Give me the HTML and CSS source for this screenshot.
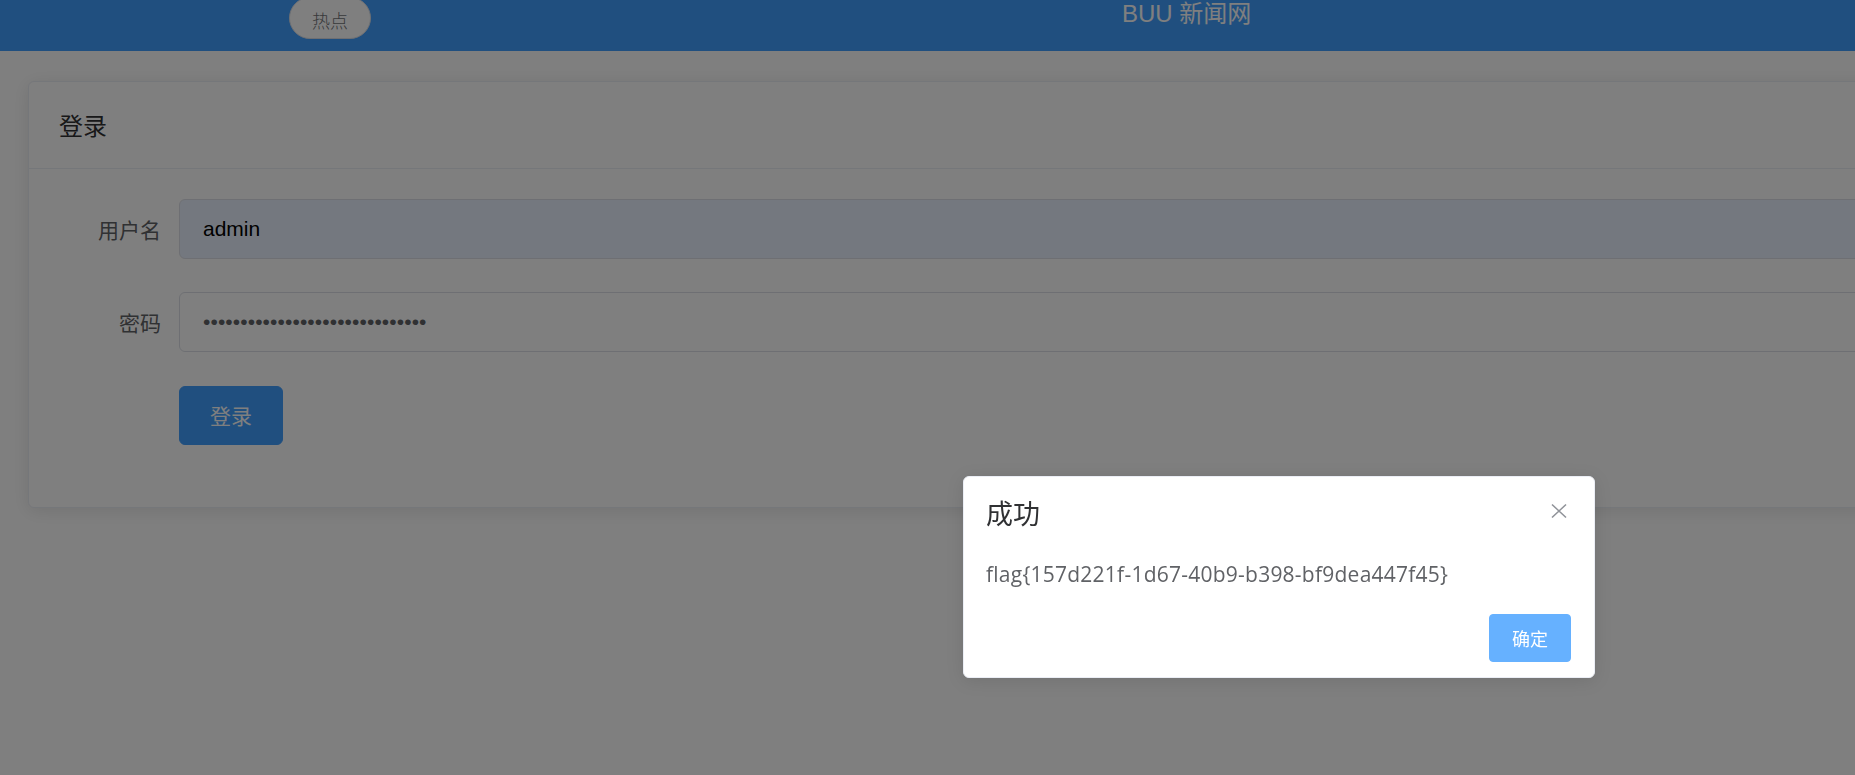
FILE: index.html
```html
<!DOCTYPE html>
<html lang="zh-CN">
<head>
<meta charset="utf-8">
<title>BUU 新闻网 - 登录</title>
<link rel="stylesheet" href="styles.css">
</head>
<body>
<div class="page">
  <header class="topbar">
    <button class="hot-pill">热点</button>
    <div class="site-title">BUU 新闻网</div>
  </header>

  <section class="card">
    <div class="card-header">登录</div>
    <div class="card-body">
      <div class="form-item">
        <label class="form-label">用户名</label>
        <div class="form-content">
          <input class="text-input autofilled" type="text" value="admin">
        </div>
      </div>
      <div class="form-item pwd">
        <label class="form-label">密码</label>
        <div class="form-content">
          <input class="text-input" type="password" value="aaaaaaaaaaaaaaaaaaaaaaaaaaaaaa">
        </div>
      </div>
      <div class="form-item last">
        <div class="form-content offset">
          <button class="primary-btn">登录</button>
        </div>
      </div>
    </div>
  </section>
</div>

<div class="mask"></div>

<div class="msgbox">
  <div class="msgbox-header">
    <div class="msgbox-title">成功</div>
    <button class="msgbox-close" aria-label="Close">
      <svg width="24" height="24" viewBox="0 0 24 24"><path d="M5 5.5 L19 18.5 M19 5.5 L5 18.5" stroke="#909399" stroke-width="1.6" fill="none"/></svg>
    </button>
  </div>
  <div class="msgbox-content">flag{157d221f-1d67-40b9-b398-bf9dea447f45}</div>
  <div class="msgbox-btns">
    <button class="confirm-btn">确定</button>
  </div>
</div>
</body>
</html>
```

FILE: styles.css
```css
html, body {
  margin: 0;
  padding: 0;
  overflow: hidden;
  background: #ffffff;
  width: 1855px;
  height: 775px;
}

body {
  font-family: "Noto Sans CJK SC", "Liberation Sans", sans-serif;
  color: #303133;
}

.page {
  width: 1855px;
}

.topbar {
  height: 51px;
  background: #409eff;
  display: flex;
  align-items: flex-start;
  overflow: hidden;
}

.hot-pill {
  margin: -3px 0 0 289px;
  width: 82px;
  height: 42px;
  border-radius: 21px;
  border: 1px solid #dcdfe6;
  background: #ffffff;
  color: #707276;
  font-family: "Noto Sans CJK SC", sans-serif;
  font-weight: 300;
  font-size: 18px;
  line-height: 1;
  padding: 3px 0 0 0;
}

.site-title {
  margin-left: 751px;
  color: #ffffff;
  font-family: "Liberation Sans", "Noto Sans CJK SC", sans-serif;
  font-size: 24px;
  line-height: 28px;
  height: 28px;
  white-space: nowrap;
}

.card {
  margin: 30px 0 0 28px;
  width: 2400px;
  border: 1px solid #ebeef5;
  border-radius: 6px;
  background: #ffffff;
  box-shadow: 0 3px 18px 0 rgba(0, 0, 0, 0.1);
  overflow: hidden;
}

.card-header {
  padding: 27px 30px;
  font-size: 24px;
  line-height: 32px;
  height: 32px;
  color: #303133;
  border-bottom: 1px solid #ebeef5;
}

.card-body {
  padding: 30px;
}

.form-item {
  display: flex;
  margin-bottom: 33px;
}

.form-item.pwd {
  margin-bottom: 34px;
}

.form-item.last {
  margin-bottom: 32px;
}

.form-label {
  width: 120px;
  flex: 0 0 120px;
  box-sizing: border-box;
  padding-right: 18px;
  text-align: right;
  font-size: 21px;
  line-height: 60px;
  color: #606266;
}

.form-content {
  flex: 1;
  display: flex;
}

.form-content.offset {
  margin-left: 120px;
}

.text-input {
  flex: 1;
  height: 60px;
  box-sizing: border-box;
  border: 1px solid #dcdfe6;
  border-radius: 6px;
  padding: 0 23px;
  font-family: "Liberation Sans", sans-serif;
  font-size: 21px;
  letter-spacing: 0.1px;
  color: #606266;
  background: #ffffff;
  outline: none;
}

.text-input.autofilled {
  background: #e8f0fe;
  color: #000000;
  letter-spacing: 0;
}

.primary-btn {
  width: 104px;
  height: 59px;
  border: 1px solid #409eff;
  border-radius: 6px;
  background: #409eff;
  color: #ffffff;
  font-family: "Noto Sans CJK SC", sans-serif;
  font-size: 21px;
  line-height: 1;
  padding: 0;
}

.mask {
  position: fixed;
  inset: 0;
  background: rgba(0, 0, 0, 0.5);
}

.msgbox {
  position: absolute;
  left: 963px;
  top: 476px;
  width: 632px;
  box-sizing: border-box;
  background: #ffffff;
  border: 1px solid #ebeef5;
  border-radius: 6px;
  box-shadow: 0 3px 18px 0 rgba(0, 0, 0, 0.1);
  padding-bottom: 15px;
}

.msgbox-header {
  position: relative;
  padding: 22px 22px 15px;
}

.msgbox-title {
  font-size: 27px;
  line-height: 27px;
  height: 27px;
  color: #303133;
}

.msgbox-close {
  position: absolute;
  top: 22px;
  right: 23px;
  width: 24px;
  height: 24px;
  padding: 0;
  border: 0;
  background: transparent;
  display: flex;
}

.msgbox-content {
  padding: 15px 22px;
  font-family: "Open Sans", "Noto Sans CJK SC", sans-serif;
  font-size: 21px;
  letter-spacing: 0.24px;
  line-height: 36px;
  color: #606266;
}

.msgbox-btns {
  padding: 7px 23px 0;
  display: flex;
  justify-content: flex-end;
}

.confirm-btn {
  width: 82px;
  height: 48px;
  border: 1px solid #66b1ff;
  border-radius: 4px;
  background: #66b1ff;
  color: #ffffff;
  font-family: "Noto Sans CJK SC", sans-serif;
  font-size: 18px;
  line-height: 1;
  padding: 0;
}
```
